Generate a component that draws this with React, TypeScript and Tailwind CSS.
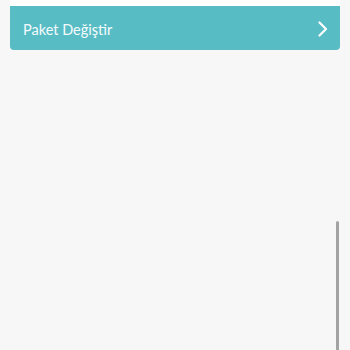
export default function App() {
  return (
    <div className="relative w-full h-screen bg-[#f7f7f7] overflow-hidden" style={{ fontFamily: "Lato, 'Open Sans', sans-serif" }}>
      <div className="px-[10px]">
        <div className="h-[6px] bg-white" />
        <button className="w-full h-[44px] bg-[#58bcc5] rounded-b-[4px] flex items-center justify-between pl-[13px] pr-[12px] text-white">
          <span className="text-[14.5px] pt-[3px] text-[#f4fbfc]">Paket Değiştir</span>
          <svg width="10" height="16" viewBox="0 0 10 16" fill="none" className="mt-[2px]">
            <polyline points="1.5,1.5 8,8 1.5,14.5" stroke="white" strokeWidth="2.2" strokeLinecap="round" strokeLinejoin="round" />
          </svg>
        </button>
      </div>
      {/* scroll indicator */}
      <div className="absolute right-[11px] top-[221px] bottom-0 w-[3px] bg-[#a3a3a3] rounded-t-full" />
    </div>
  );
}
